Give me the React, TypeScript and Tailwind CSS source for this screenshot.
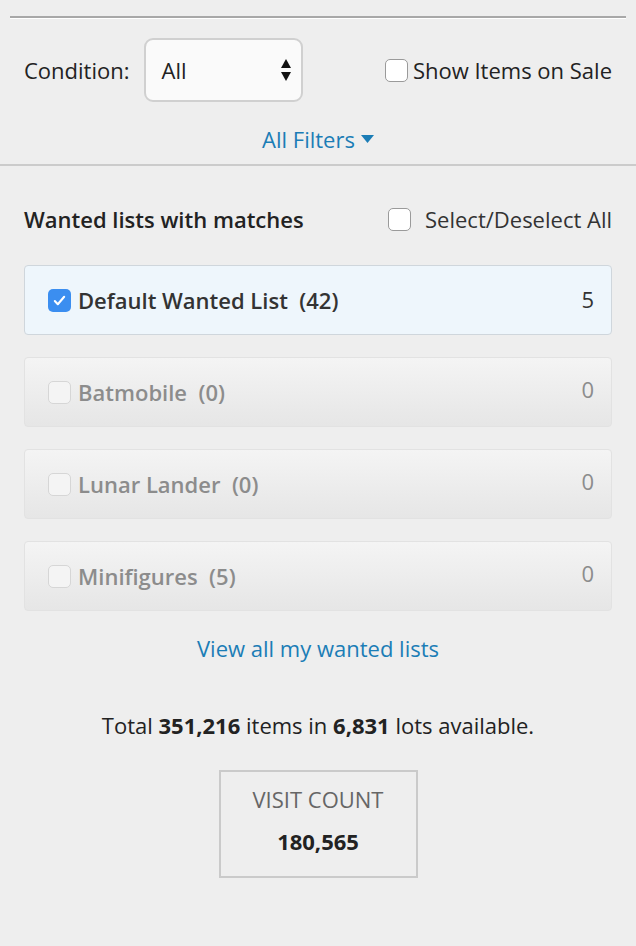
import React from "react";

interface WantedList {
  name: string;
  total: number;
  matches: number;
  checked: boolean;
}

const lists: WantedList[] = [
  { name: "Default Wanted List", total: 42, matches: 5, checked: true },
  { name: "Batmobile", total: 0, matches: 0, checked: false },
  { name: "Lunar Lander", total: 0, matches: 0, checked: false },
  { name: "Minifigures", total: 5, matches: 0, checked: false },
];

const Box: React.FC<{ checked?: boolean; muted?: boolean }> = ({ checked, muted }) => {
  if (checked) {
    return (
      <span className="w-[23px] h-[23px] rounded-[5px] bg-[#3b8ef0] flex items-center justify-center shrink-0">
        <svg width="15" height="15" viewBox="0 0 16 16" fill="none">
          <path d="M3 8.5l3.2 3.5L13 4" stroke="white" strokeWidth="2.2" strokeLinecap="round" strokeLinejoin="round" />
        </svg>
      </span>
    );
  }
  return (
    <span
      className={
        muted
          ? "w-[23px] h-[23px] rounded-[5px] border border-[#d6d6d6] bg-[#f4f4f4] shrink-0"
          : "w-[23px] h-[23px] rounded-[5px] border border-[#9a9a9a] bg-white shrink-0"
      }
    />
  );
};

const ListCard: React.FC<{ list: WantedList }> = ({ list }) => {
  if (list.checked) {
    return (
      <div className="h-[70px] rounded-[4px] border border-[#cfd6dc] bg-[#eef6fc] flex items-center pl-[23px] pr-[17px]">
        <Box checked />
        <span className="ml-[7px] text-[#333] font-semibold">
          {list.name}&nbsp; ({list.total})
        </span>
        <span className="ml-auto text-[#333] -mt-[2px]">{list.matches}</span>
      </div>
    );
  }
  return (
    <div className="h-[70px] rounded-[4px] border border-[#e2e2e2] bg-gradient-to-b from-[#f4f4f4] to-[#e6e6e6] flex items-center pl-[23px] pr-[17px]">
      <Box muted />
      <span className="ml-[7px] text-[#8c8c8c] font-semibold">
        {list.name}&nbsp; ({list.total})
      </span>
      <span className="ml-auto text-[#8c8c8c] -mt-[6px]">{list.matches}</span>
    </div>
  );
};

export default function App() {
  return (
    <div className="min-h-[946px] w-[636px] bg-[#eeeeee] text-[22px] leading-[30px] text-[#222] font-['Open_Sans','Lato',sans-serif]">
      <div className="pt-4 px-[10px]">
        <div className="border-t-2 border-[#a8a8a8]" />
        <div className="border-t border-white" />
      </div>

      <div className="flex items-center px-6 mt-[19px]">
        <span>Condition:</span>
        <div className="ml-[14px] w-[159px] h-[64px] rounded-[9px] border-2 border-[#d0d0d0] bg-[#fafafa] flex items-center pl-[16px] pr-[9px]">
          <span>All</span>
          <svg className="ml-auto" width="12" height="24" viewBox="0 0 12 24">
            <path d="M6 1L11 10H1z" fill="#111" />
            <path d="M6 23L11 14H1z" fill="#111" />
          </svg>
        </div>
        <label className="ml-auto flex items-center gap-[5px]">
          <Box />
          <span>Show Items on Sale</span>
        </label>
      </div>

      <div className="flex justify-center items-center mt-[22px] text-[#1b7db6]">
        <span>All Filters</span>
        <svg className="ml-[6px]" width="13" height="8" viewBox="0 0 13 8">
          <path d="M0 0h13L6.5 8z" fill="#1b7db6" />
        </svg>
      </div>

      <div className="mt-[10px] border-t-2 border-[#cbcbcb]" />

      <div className="px-6">
        <div className="flex items-center mt-[38px]">
          <span className="font-semibold">Wanted lists with matches</span>
          <label className="ml-auto flex items-center gap-[14px]">
            <Box />
            <span className="text-[#333]">Select/Deselect All</span>
          </label>
        </div>

        <div className="mt-[31px] flex flex-col gap-[22px]">
          {lists.map((l) => (
            <ListCard key={l.name} list={l} />
          ))}
        </div>

        <div className="text-center mt-[22px] text-[#1b7db6]">View all my wanted lists</div>

        <div className="text-center mt-[47px] text-[#222]">
          Total <b>351,216</b> items in <b>6,831</b> lots available.
        </div>

        <div className="flex justify-center mt-[30px]">
          <div className="w-[199px] h-[108px] border-2 border-[#cacaca] flex flex-col items-center pt-[12px]">
            <span className="text-[#666]">VISIT COUNT</span>
            <span className="font-bold mt-[12px]">180,565</span>
          </div>
        </div>
      </div>
    </div>
  );
}
